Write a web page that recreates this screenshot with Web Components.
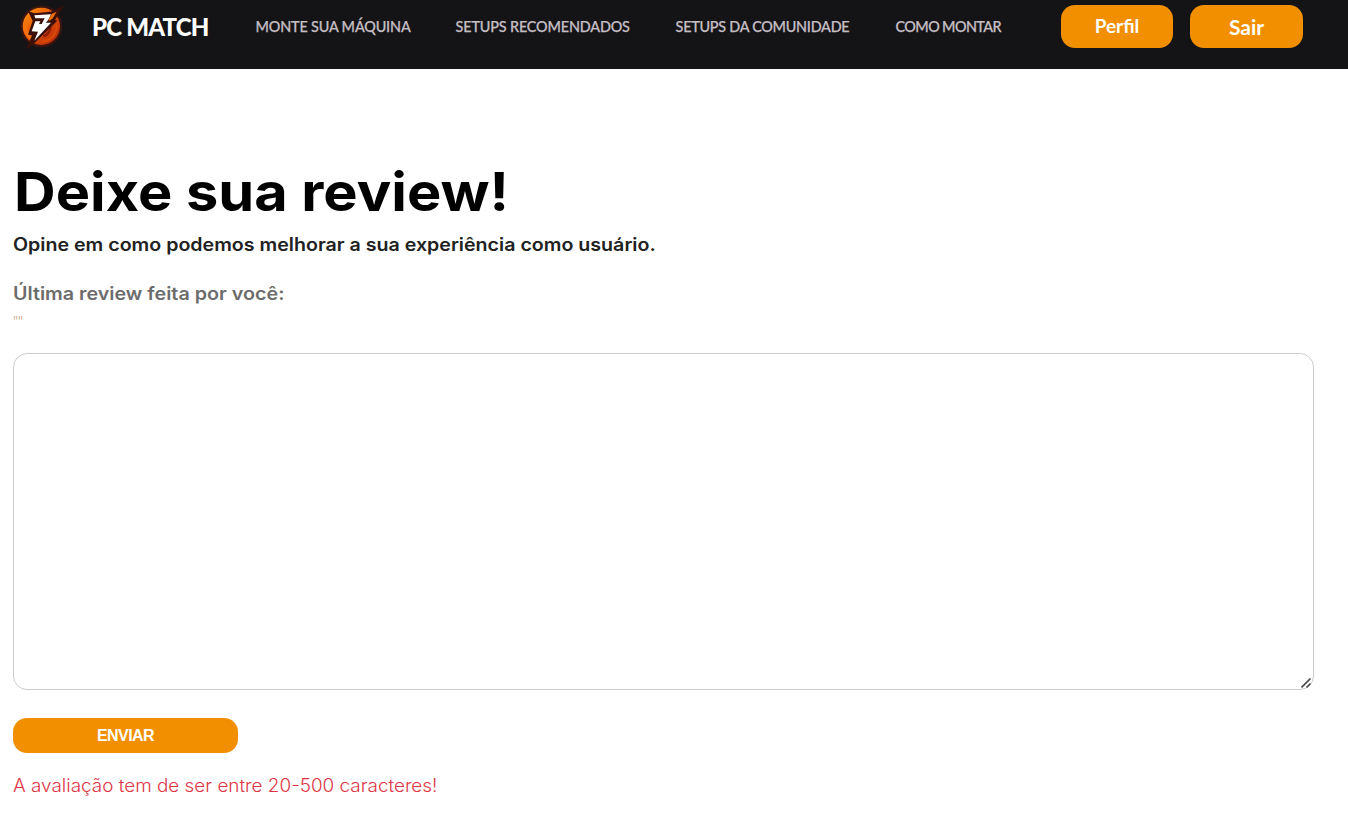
<!DOCTYPE html>
<html lang="pt-BR">
<head>
<meta charset="utf-8">
<title>PC Match</title>
<style>
html,body{margin:0;background:#fff;color:#000;font-family:Inter,"Liberation Sans",sans-serif}
body{height:834px;overflow:hidden}
</style>
</head>
<body>
<pc-header>
  <pc-logo slot="brand"></pc-logo>
  <pc-link>MONTE SUA MÁQUINA</pc-link>
  <pc-link style="width:175px">SETUPS RECOMENDADOS</pc-link>
  <pc-link style="width:175px;letter-spacing:-.25px">SETUPS DA COMUNIDADE</pc-link>
  <pc-link style="letter-spacing:-.6px">COMO MONTAR</pc-link>
  <pc-button slot="actions" style="width:112px;--size:19px;--shift:2px">Perfil</pc-button>
  <pc-button slot="actions" style="width:113px;--size:21px">Sair</pc-button>
</pc-header>
<pc-review>
  <span slot="title">Deixe sua review!</span>
  <span slot="subtitle">Opine em como podemos melhorar a sua experiência como usuário.</span>
  <span slot="label">Última review feita por você:</span>
  <span slot="last">""</span>
  <pc-button slot="submit" style="width:225px;height:35px;--font:'Liberation Sans',Arial,sans-serif;--size:16px;--track:-.55px">ENVIAR</pc-button>
  <span slot="error">A avaliação tem de ser entre 20-500 caracteres!</span>
</pc-review>
<script>
class Base extends HTMLElement{
  constructor(){super();this.attachShadow({mode:'open'}).innerHTML=this.constructor.markup}
}
customElements.define('pc-logo',class extends Base{static markup=`
<style>
:host{display:flex;align-items:center;height:54px;font:900 24px/54px Lato,sans-serif;letter-spacing:-.8px;color:#fff;white-space:nowrap}
svg{display:block;width:45px;height:46px;margin-right:28px}
span{width:114.5px}
</style>
<svg viewBox="57 15 135 138" aria-hidden="true">
<defs><linearGradient id="g" x1="0" y1="0" x2="1" y2="1"><stop offset="0" stop-color="#ff9d0c"/><stop offset=".45" stop-color="#e9540b"/><stop offset="1" stop-color="#a92205"/></linearGradient></defs>
<circle cx="124" cy="82" r="63" fill="#3a1510"/>
<circle cx="124" cy="82" r="56" fill="url(#g)"/>
<path d="M71 74A53 53 0 0 0 96 127L100 114A44 44 0 0 1 80 74Z" fill="#f4720b"/>
<path d="M164 58A47 47 0 0 1 125 128" fill="none" stroke="#d9480a" stroke-width="7"/>
<path d="M151 80A30 30 0 0 1 130 112" fill="none" stroke="#8f1d05" stroke-width="8"/>
<path d="M84 37L104 43L152 38L192 19L165 63L172 65L104 132L78 152L96 109L84 107L98 65Z" fill="#3a1009"/>
<path d="M155 45L170 38L158 58L149 65L145 63Z" fill="#f4720b"/>
<path d="M103 49L153 46L144 64L137 71L153 71L103 125L114 98L95 97L106 67L121 67L117 75L125 75L134 58L106 58Z" fill="#fff"/>
</svg>
<span>PC MATCH</span>`});
customElements.define('pc-link',class extends Base{static markup=`
<style>:host{display:block;font:500 14.4px/54px Lato,sans-serif;letter-spacing:-.15px;color:#c5bfc4;-webkit-text-stroke:.25px #c5bfc4;white-space:nowrap}</style><slot></slot>`});
customElements.define('pc-button',class extends Base{static markup=`
<style>
:host{display:block;height:43px}
button{box-sizing:border-box;width:100%;height:100%;border:0;border-radius:14px;background:#f18f01;color:#fff;padding:0 0 var(--shift,0);font:700 var(--size) var(--font,Lato,sans-serif);letter-spacing:var(--track,0);cursor:pointer}
</style><button><slot></slot></button>`});
customElements.define('pc-header',class extends Base{static markup=`
<style>
:host{display:flex;box-sizing:border-box;height:69px;padding:0 45px 0 19px;background:#141416}
nav{display:flex;gap:45px;margin-left:49px}
.actions{display:flex;gap:17px;margin-left:auto;padding-top:5px}
</style><slot name="brand"></slot><nav><slot></slot></nav><div class="actions"><slot name="actions"></slot></div>`});
customElements.define('pc-review',class extends Base{static markup=`
<style>
:host{display:flex;flex-direction:column;align-items:flex-start;padding:89px 34px 0 13px;white-space:nowrap}
h1,h2,h3,p{margin:0;transform-origin:0 50%}
h1{margin-left:1px;font:700 53.5px/68px Inter,sans-serif;transform:scaleX(1.078)}
h2{margin-top:6px;font:600 18px/26px Inter,sans-serif;transform:scaleX(1.09);color:#212121}
h3{margin-top:23px;font:600 18px/26px Inter,sans-serif;transform:scaleX(1.095);color:#6c6c6c}
.last{height:24px;padding-top:2px;font:300 14px/26px "Open Sans",sans-serif;color:#c98a58}
.field{position:relative;width:100%;margin:20px 0 28px}
textarea{display:block;box-sizing:border-box;width:100%;height:337px;border:1px solid #ccc;border-radius:14px;padding:10px;outline:0;background:#fff;resize:none}
.grip{position:absolute;right:2px;bottom:1px;width:11px;height:11px}
.error{margin-top:20px;font:300 18px/26px Inter,sans-serif;transform:scaleX(1.05);color:#dc3545}
</style>
<h1><slot name="title"></slot></h1>
<h2><slot name="subtitle"></slot></h2>
<h3><slot name="label"></slot></h3>
<p class="last"><slot name="last"></slot></p>
<div class="field"><textarea aria-label="Review"></textarea>
<svg class="grip" viewBox="0 0 11 11" aria-hidden="true"><path d="M.5 9.5L9.5 .5M5.5 9.5L9.5 5.5" stroke="#444" stroke-width="1.6" fill="none"/></svg></div>
<slot name="submit"></slot>
<p class="error"><slot name="error"></slot></p>`});
</script>
</body>
</html>
